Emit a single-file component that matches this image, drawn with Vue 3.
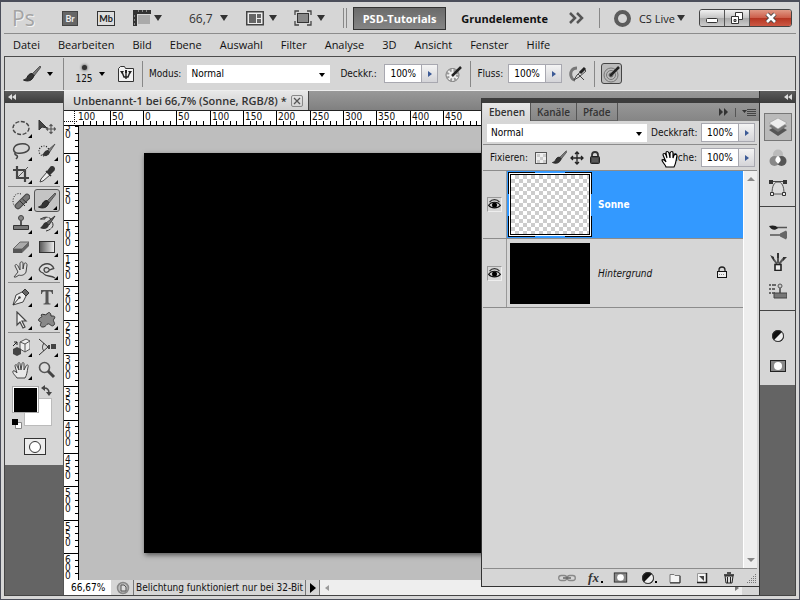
<script setup>
import { ref } from 'vue'

const menus = ['Datei', 'Bearbeiten', 'Bild', 'Ebene', 'Auswahl', 'Filter', 'Analyse', '3D', 'Ansicht', 'Fenster', 'Hilfe']

const brushShape = '<path d="M17 1l1 1-7 9-2-2z" fill="#777" stroke="#444" stroke-width=".8"/><path d="M9 8.500c-3 0-4 2-5 4-1 1.500-2 2-3.500 2.500 4 2 9 1 10.500-4.500z" fill="#333" stroke="#222"/>'

const icons = {
  ellipse: '<ellipse cx="9" cy="9" rx="8" ry="6.5" fill="none" stroke="#444" stroke-width="1.4" stroke-dasharray="4 1.6"/>',
  move: '<path d="M1 1v10l3-3 5 1z" fill="#444" stroke="#333"/><path d="M13 5.5v9M8.5 10h9M11.5 7L13 5.500l1.500 1.500M11.500 13l1.500 1.500 1.500-1.500M10 8.500L8.500 10l1.500 1.500M16 8.500l1.500 1.500-1.500 1.500" fill="none" stroke="#555" stroke-width="1.100"/>',
  lasso: '<path d="M4 11C0 9 1 3 8 2s10 2 9 5-7 5-12 4c-2-1-3 1-1 2s2 2 0 4" fill="none" stroke="#444" stroke-width="1.500"/>',
  quick: '<circle cx="6" cy="9" r="5" fill="none" stroke="#222" stroke-width="1.200" stroke-dasharray="1 1.500"/><path d="M17 2L9 9l2 2z" fill="#888" stroke="#555"/><path d="M10 8c-3 0-4 3-6 5 3 2 7 1 8-3z" fill="#333"/>',
  crop: '<path d="M5 1v12h12M1 5h12v12" fill="none" stroke="#444" stroke-width="2.200"/><path d="M5 13L16 2" stroke="#555"/>',
  pipette: '<path d="M9 7l3 3-7 6-3 1 1-3z" fill="#eee" stroke="#444"/><path d="M8 6l5 5M10 6l3-4c2-1 4 1 3 3l-4 4z" fill="#333" stroke="#333" stroke-width="1.500"/>',
  heal: '<path d="M9 2C4 0 1 5 1 9s2 6 5 7" fill="none" stroke="#222" stroke-dasharray="1 1.500"/><path d="M6 14L15 5" stroke="#444" stroke-width="6.500" stroke-linecap="round"/><path d="M6 14L15 5" stroke="#777" stroke-width="4.500" stroke-linecap="round"/><path d="M8 9l5 5M10.500 7l4.500 4" stroke="#333"/>',
  brush: brushShape,
  stamp: '<circle cx="9" cy="3" r="2.500" fill="#888" stroke="#444"/><path d="M8 5h2v5H8z" fill="#555"/><path d="M1.500 10.500h15v4h-15z" fill="#777" stroke="#333"/>',
  history: '<path d="M2 4h5V1M3 4c4-3 9-2 11 1M14 7c3 4-1 8-6 9" fill="none" stroke="#333" stroke-dasharray="7 1"/><path d="M17 1L8 8l3 2z" fill="#666" stroke="#333"/><path d="M8 7c-3 1-3 4-6 6 4 2 8 1 9-3z" fill="#333"/>',
  eraser: '<path d="M1 11l7-7h9l-7 7z" fill="#aaa" stroke="#666"/><path d="M1 11h9v4H1z" fill="#555"/><path d="M10 11l7-7v4l-7 7z" fill="#666"/>',
  gradient: '<rect x="1.500" y="3.500" width="15" height="11" fill="url(#ramp)" stroke="#333"/>',
  smudge: '<path d="M2 16l4-5-3-6c0-2 2-2 3 0l2 4V2c1-2 3-1 3 0v6l1-5c1-2 3-1 3 1l-1 7c-1 3-5 4-7 3l-3 2z" fill="#ddd" stroke="#444"/>',
  sponge: '<path d="M16 8c-1-4-5-6-9-5S0 8 2 10c1 2 3 1 4 3 2 3 7 1 11 4M6 9c0-3 4-3 5-1s-2 4-4 3zM11 9c2 0 3-2 5-1" fill="#ddd" stroke="#444" stroke-width="1.300"/>',
  pen: '<path d="M1 17l3-10 6-3 4 4-3 6z" fill="#eee" stroke="#444"/><path d="M10 4l3-3 4 4-3 3z" fill="#666" stroke="#333"/><path d="M1 17l6-7" stroke="#333"/><circle cx="7.500" cy="9.500" r="1.200" fill="#333"/>',
  type: '<path d="M3 2h12v4h-1c0-2-1-2.500-3.500-2.500V14c0 1.500 1 1.500 2 1.500v1h-7v-1c1 0 2 0 2-1.500V3.500C5 3.500 4 4 4 6H3z" fill="#555"/>',
  arrow: '<path d="M5 1v13l3-3 3 6 2-1-3-6h4z" fill="#eee" stroke="#444" stroke-width="1.200"/>',
  shape: '<path d="M3 4c2-2 4 1 6-1 2-3 4-1 4 2 3 0 5 0 3 3-2 2 2 4 0 6s-3 0-5-1-3 3-6 3-3-2-2-4-4-1-2-4 4-1 2-4z" fill="#888" stroke="#333"/>',
  cube: '<path d="M8 4l6-3 4 2v8l-5 3-5-3z" fill="#eee" stroke="#555"/><path d="M8 4l5 2 5-3M13 6v8" fill="none" stroke="#555"/><path d="M1 11l4-2 4 2v5l-4 2-4-2z" fill="#444"/><path d="M1 8l4-4M2 4h3v3" fill="none" stroke="#222"/>',
  camera: '<path d="M1 1l9 8-9 8M6 5c-2 3-2 6 0 8" fill="none" stroke="#333"/><path d="M10 7h2v4h-2zM13 6h5v5h-5z" fill="#444"/>',
  hand: '<path d="M5 17c-2-3-5-5-4-7 1-1 3 1 4 2L3 5c0-2 2-2 2 0l2 4-1-6c0-2 2-2 2 0l1 6 1-6c0-2 2-2 2 0v6l2-4c1-2 3-1 2 1-1 5-1 8-3 11z" fill="#e8e8e8" stroke="#444"/>',
  zoom: '<circle cx="6.500" cy="6.500" r="5" fill="#ddd" stroke="#555" stroke-width="1.600"/><path d="M10 10l6 6" stroke="#444" stroke-width="3"/>',
  layers: '<path d="M9 7l9 5-9 6-9-6z" fill="#555"/><path d="M9 3l9 5-9 6-9-6z" fill="#777"/><path d="M9 0l9 5-9 6-9-6z" fill="#eee" stroke="#999" stroke-width=".6"/>',
  channels: '<circle cx="9" cy="5.500" r="5" fill="#bbb"/><circle cx="5.500" cy="12" r="5" fill="#888"/><circle cx="12.500" cy="12" r="5" fill="#555"/><path d="M9 7c2 1 3 3 2.500 5L9 15l-2.500-3C6 10 7 8 9 7z" fill="#fff"/>',
  paths: '<path d="M3 15C3 7 5 3 9 3s6 4 6 12z" fill="#ddd" stroke="#555"/><path d="M2 2.500h14" stroke="#444"/><path d="M0 1h4v4H0zM14 1h4v4h-4z" fill="#333"/><path d="M1.500 13.500h3v3h-3zM13.500 13.500h3v3h-3z" fill="#eee" stroke="#333"/>',
  tools: '<path d="M6 4.500h12M1 12h11" stroke="#555" stroke-width="1.600"/><path d="M0 3c3-1 7-1 9 2-3 3-7 2-9-2z" fill="#222"/><path d="M11 10.500l6-3c2 2 2 6 0 9l-6-3z" fill="#666"/>',
  brushes: '<path d="M8 11L3 4M9 10V2M10 11l5-6" stroke="#555" stroke-width="2"/><path d="M1 2l4 2v4zM14 4h4l-4 4zM8 0h2v5H8z" fill="#333"/><rect x="6" y="11.500" width="6" height="6" fill="#eee" stroke="#222" stroke-width="1.600"/>',
  source: '<path d="M0 2h2M0 6h2M0 10h2M3 2h4M3 6h3M3 10h3" stroke="#444" stroke-width="1.500"/><circle cx="11" cy="3" r="2" fill="#ccc" stroke="#555"/><path d="M10 5h2v5h-2z" fill="#666"/><path d="M5 10h13v5H5z" fill="#777" stroke="#444"/>',
  adjust: '<circle cx="9" cy="9" r="6" fill="#111"/><path d="M13.200 4.800A6 6 0 0 1 4.800 13.200z" fill="#eee"/><circle cx="9" cy="9" r="5.500" fill="none" stroke="#333"/>',
  mask: '<rect x="1.500" y="3.500" width="15" height="11" fill="#888" stroke="#222"/><circle cx="9" cy="9" r="4" fill="#fff"/>',
  airbrush: '<circle cx="7.500" cy="10" r="6.500" fill="#eee" stroke="#777"/><circle cx="7.500" cy="10" r="5" fill="none" stroke="#999" stroke-width="3" stroke-dasharray="2 2"/><path d="M7 11L16 2" stroke="#222" stroke-width="2.500"/>',
  spray: '<path d="M8 3C3 3 1 7 2 11s3 4 4 4" fill="none" stroke="#777" stroke-width="3"/><path d="M5 15l3-5 7-6 2 2-7 6zM9 9l6 6" fill="#ddd" stroke="#444"/><path d="M11 8l5-5" stroke="#222" stroke-width="3"/>',
  target: '<circle cx="8" cy="10" r="7" fill="none" stroke="#777"/><circle cx="8" cy="10" r="4.500" fill="none" stroke="#777"/><circle cx="8" cy="10" r="2" fill="none" stroke="#666"/><path d="M7 11L16 2" stroke="#222" stroke-width="2.500"/>',
  brushFolder: '<path d="M1.500 3.500l2-2h4l1 2h8v13h-15z" fill="#f2f2f2" stroke="#333"/><path d="M9 14V7M5 7l2 5h4l2-5" fill="none" stroke="#222" stroke-width="1.400"/><path d="M3 6h4L5 9zM11 6h4l-2 3zM8 5h2v3H8z" fill="#222"/>',
  film: '<path d="M0 1h18v4H4v12H0z" fill="#333"/><path d="M5 2h1M9 2h1M13 2h1M1 7h1M1 11h1M1 15h1" stroke="#ddd"/><rect x="5" y="6" width="12" height="9" fill="#aaa"/>',
  arrange: '<rect x=".750" y="2.750" width="16.500" height="13" fill="#eee" stroke="#444" stroke-width="1.500"/><path d="M3 5h7v9H3zM11 5h4v4h-4zM11 10h4v4h-4z" fill="#666"/>',
  screen: '<path d="M1 6V2h4M13 2h4v4M17 12v4h-4M5 16H1v-4" fill="none" stroke="#444" stroke-width="1.300"/><rect x="3.500" y="4.500" width="11" height="9" fill="#888" stroke="#333"/>',
  checker: '<rect x="3.500" y="3.500" width="11" height="11" fill="#eee" stroke="#555"/><path d="M5 5h3v3H5zM11 5h3v3h-3zM8 8h3v3H8zM5 11h3v3H5zM11 11h3v3h-3z" fill="#ccc"/>',
  position: '<path d="M9 3v12M3 9h12M7 5l2-2 2 2M7 13l2 2 2-2M5 7L3 9l2 2M13 7l2 2-2 2" fill="none" stroke="#222" stroke-width="1.300"/>',
  lock: '<path d="M6 8V6c0-4 6-4 6 0v2" fill="none" stroke="#333" stroke-width="1.800"/><rect x="4.500" y="7.500" width="9" height="7" rx="1" fill="#444" stroke="#222"/><path d="M6 10h6M6 12h6" stroke="#888" stroke-width=".6"/>',
  lockOpen: '<path d="M6 8V6c0-4 6-4 6 0v2" fill="none" stroke="#222" stroke-width="1.300"/><rect x="4.500" y="7.500" width="9" height="6" fill="#eee" stroke="#111"/><path d="M6 10.500h6" stroke="#888" stroke-dasharray="1 1"/>',
  eye: '<path d="M2 10c3-5 11-5 14 0-3 4-11 4-14 0z" fill="#ccc" stroke="#111" stroke-width="1.400"/><circle cx="9" cy="9.500" r="3" fill="#000"/><path d="M3 6c3-4 9-4 12 0" fill="none" stroke="#333" stroke-width="1.500"/>',
  link: '<rect x=".7" y="6.500" width="8" height="5" rx="2.500" fill="none" stroke="#888" stroke-width="1.300"/><rect x="9.300" y="6.500" width="8" height="5" rx="2.500" fill="none" stroke="#888" stroke-width="1.300"/><path d="M5 9h8" stroke="#666" stroke-width="1.500"/>',
  folder: '<path d="M4 13.500v-8h4l1 1h5v7z" fill="#f4f4f4" stroke="#777"/><path d="M14 7v7H4" fill="none" stroke="#333"/>',
  page: '<path d="M4.500 4.500h9v9h-9z" fill="#f4f4f4" stroke="#999"/><path d="M13.500 4v9.500H4" fill="none" stroke="#222" stroke-width="1.500"/><path d="M6 7h5v5z" fill="#444"/>',
  trash: '<path d="M5 7h8l-1 7H6z" fill="#ddd" stroke="#222"/><path d="M4 6h10M7 4h4" stroke="#222" stroke-width="1.400"/><path d="M7.500 8v6M10.500 8v6" stroke="#222"/>'
}

const toolGroups = [
  [['ellipse', 1], ['move', 0], ['lasso', 1], ['quick', 1], ['crop', 1], ['pipette', 1]],
  [['heal', 1], ['brush', 1], ['stamp', 1], ['history', 1], ['eraser', 1], ['gradient', 1], ['smudge', 1], ['sponge', 1]],
  [['pen', 1], ['type', 1], ['arrow', 1], ['shape', 1]],
  [['cube', 1], ['camera', 1], ['hand', 1], ['zoom', 0]]
]
const activeTool = ref('brush')

const dockGroups = [['layers', 'channels', 'paths'], ['tools', 'brushes', 'source'], ['adjust', 'mask']]
const activeDock = ref('layers')

// At 66.7% zoom fifty document pixels cover a third of a hundred screen pixels.
const STEP = 100 / 3
function majors(origin, from, to) {
  const out = []
  for (let i = from; i <= to; i++) out.push({ pos: Math.round(origin + i * STEP), label: String(Math.abs(i * 50)) })
  return out
}
function minors(origin, from, to) {
  const out = []
  for (let i = from * 5; i <= to * 5; i++) out.push(Math.round(origin + (i * STEP) / 5))
  return out
}
const hMajor = majors(66, -2, 9)
const hMinor = minors(66, -2, 18)
const vMajor = majors(28, -1, 12)
const vMinor = minors(28, -1, 13)

const opacity = ref('100%')
const flow = ref('100%')
const layerOpacity = ref('100%')
const layerFill = ref('100%')
const layers = [
  { name: 'Sonne', kind: 'clear' },
  { name: 'Hintergrund', kind: 'black' }
]
const selectedLayer = ref('Sonne')
</script>

<template>
  <div class="window">
    <svg class="defs" aria-hidden="true">
      <defs>
        <linearGradient id="ramp"><stop offset="0" stop-color="#555" /><stop offset="1" stop-color="#f2f2f2" /></linearGradient>
      </defs>
    </svg>

    <header class="titlebar">
      <span class="ps">Ps</span>
      <button class="chip br" aria-label="Bridge">Br</button>
      <button class="chip mb" aria-label="Mini Bridge">Mb</button>
      <button class="drop extras" aria-label="Extras"><svg class="ico" viewBox="0 0 18 18" v-html="icons.film" /><i class="tri" /></button>
      <button class="drop zoomlevel">66,7<i class="tri" /></button>
      <button class="drop arrange" aria-label="Dokumente anordnen"><svg class="ico" viewBox="0 0 18 18" v-html="icons.arrange" /><i class="tri" /></button>
      <button class="drop" aria-label="Bildschirmmodus"><svg class="ico" viewBox="0 0 18 18" v-html="icons.screen" /><i class="tri" /></button>
      <i class="double" />
      <button class="workspace on">PSD-Tutorials</button>
      <button class="workspace">Grundelemente</button>
      <button class="chevrons" aria-label="Mehr">
        <svg width="16" height="12" viewBox="0 0 16 12"><path d="M1 1l5 5-5 5M8 1l5 5-5 5" fill="none" stroke="#555" stroke-width="2.500" /></svg>
      </button>
      <i class="rule" />
      <button class="live"><i class="ring" />CS Live<i class="tri" /></button>
      <div class="winbtns">
        <button aria-label="Minimieren"><svg width="14" height="14" viewBox="0 0 14 14"><rect x="1.500" y="7.500" width="11" height="4" rx="1" fill="#fff" stroke="#333" /></svg></button>
        <button aria-label="Wiederherstellen"><svg width="14" height="14" viewBox="0 0 14 14"><path d="M5.500 1.500h7v7h-7z" fill="#fff" stroke="#333" /><path d="M1.500 5.500h7v7h-7z" fill="#fff" stroke="#333" /><path d="M4 8.500h2v2H4z" fill="#ccc" stroke="#333" /></svg></button>
        <button class="close" aria-label="Schließen"><svg width="14" height="14" viewBox="0 0 14 14"><path d="M3 3l8 8M11 3l-8 8" stroke="#444" stroke-width="4.500" /><path d="M3 3l8 8M11 3l-8 8" stroke="#fff" stroke-width="2.600" /></svg></button>
      </div>
    </header>

    <nav class="menubar">
      <a v-for="m in menus" :key="m" href="#">{{ m }}</a>
    </nav>

    <section class="options">
      <i class="vgrip" />
      <button class="drop tool" aria-label="Pinsel"><svg class="ico" viewBox="0 0 18 18" v-html="icons.brush" /><i class="tri small" /></button>
      <i class="sep tall" />
      <button class="drop tip"><span class="tipbox"><i class="dot" />125</span><i class="tri small" /></button>
      <button class="plain" aria-label="Pinselbedienfeld"><svg class="ico" viewBox="0 0 18 18" v-html="icons.brushFolder" /></button>
      <i class="sep" />
      <label for="mode">Modus:</label>
      <span class="selectbox mode"><select id="mode"><option>Normal</option></select><i class="tri small" /></span>
      <label for="opac" class="lopac">Deckkr.:</label>
      <span class="num"><input id="opac" v-model="opacity"><button aria-label="Deckkraft einstellen"><i class="right" /></button></span>
      <button class="plain a" aria-label="Druck für Deckkraft"><svg class="ico" viewBox="0 0 18 18" v-html="icons.airbrush" /></button>
      <i class="sep" />
      <label for="flow">Fluss:</label>
      <span class="num"><input id="flow" v-model="flow"><button aria-label="Fluss einstellen"><i class="right" /></button></span>
      <button class="plain a" aria-label="Airbrush"><svg class="ico" viewBox="0 0 18 18" v-html="icons.spray" /></button>
      <i class="sep" />
      <button class="plain boxed" aria-label="Druck für Größe"><svg class="ico" viewBox="0 0 18 18" v-html="icons.target" /></button>
    </section>

    <main class="work">
      <aside class="toolbox">
        <button class="collapse" aria-label="Werkzeuge einklappen"><svg width="8" height="6" viewBox="0 0 8 6"><path d="M4 0v6L0 3zM8 0v6L4 3z" fill="#ddd" /></svg></button>
        <div class="toolbody">
          <i class="hgrip" />
          <div v-for="(group, g) in toolGroups" :key="g" class="group">
            <button v-for="[name, more] in group" :key="name" class="tool-btn" :class="{ on: name === activeTool, more }" :aria-label="name" @click="activeTool = name">
              <svg class="ico" viewBox="0 0 18 18" v-html="icons[name]" />
            </button>
          </div>
          <div class="colors">
            <svg width="42" height="44" viewBox="0 0 42 44">
              <rect x="13.500" y="13.500" width="27" height="27" fill="#fff" stroke="#bbb" />
              <rect x="1.500" y="1.500" width="26" height="26" fill="#fff" stroke="#aaa" />
              <rect x="3" y="3" width="23" height="24" fill="#000" />
              <path d="M33 3c4 0 5 2 5 5" fill="none" stroke="#444" stroke-width="1.500" />
              <path d="M34 0v6l-4-3zM35 7h6l-3 4z" fill="#444" />
              <path d="M4.500 37.500h6v6h-6z" fill="#fff" stroke="#888" /><path d="M1 34h6v6H1z" fill="#000" />
            </svg>
          </div>
          <button class="quickmask" aria-label="Maskierungsmodus"><i /></button>
        </div>
      </aside>

      <section class="document">
        <div class="tabs">
          <div class="tab"><span>Unbenannt-1 bei 66,7% (Sonne, RGB/8) *</span>
            <button class="x" aria-label="Dokument schließen"><svg width="8" height="8" viewBox="0 0 8 8"><path d="M1 1l6 6M7 1L1 7" stroke="#555" stroke-width="1.300" /></svg></button>
          </div>
        </div>
        <div class="hruler">
          <svg class="corner" viewBox="0 0 14 14"><path d="M10.500 0v14M0 10.500h14" stroke="#111" stroke-dasharray="1 1" /></svg>
          <svg class="scale">
            <path v-for="m in hMinor" :key="'a' + m" :d="`M${m - 0.5} 10v4`" stroke="#000" />
            <g v-for="m in hMajor" :key="m.pos"><path :d="`M${m.pos - 0.5} 0v14`" stroke="#000" /><text :x="m.pos + 1" y="9">{{ m.label }}</text></g>
          </svg>
        </div>
        <div class="stage">
          <svg class="vruler">
            <path v-for="m in vMinor" :key="'a' + m" :d="`M11 ${m - 0.5}h3`" stroke="#000" />
            <g v-for="m in vMajor" :key="m.pos">
              <path :d="`M0 ${m.pos - 0.5}h14`" stroke="#000" />
              <text v-for="(d, i) in m.label" :key="i" x="1" :y="m.pos + 9 + i * 8">{{ d }}</text>
            </g>
          </svg>
          <div class="canvas"><div class="paper" /></div>
        </div>
        <footer class="status">
          <input class="pct" aria-label="Zoom" value="66,67%">
          <span class="state"><svg width="14" height="14" viewBox="0 0 14 14"><circle cx="7" cy="7" r="5.500" fill="#bbb" stroke="#888" stroke-width="1.500" /><path d="M5 4h3l2 2v4H5z" fill="#ddd" stroke="#555" /></svg></span>
          <span class="msg">Belichtung funktioniert nur bei 32-Bit</span>
          <button class="play" aria-label="Statusanzeige"><i class="right big" /></button>
          <div class="hscroll"><i class="left" /><i class="right grey" /></div>
          <i class="nook" />
        </footer>

        <section class="panel">
          <div class="ptabs">
            <button class="on">Ebenen</button><button>Kanäle</button><button>Pfade</button>
            <span class="pmenu">
              <svg width="10" height="8" viewBox="0 0 10 8"><path d="M0 0v8l4-4zM5 0v8l4-4z" fill="#333" /></svg>
              <i />
              <svg width="14" height="9" viewBox="0 0 14 9"><path d="M0 2h5L2.500 5z" fill="#333" /><path d="M5 1.500h9M5 3.500h9M5 5.500h9M5 7.500h9" stroke="#444" /></svg>
            </span>
          </div>
          <div class="prow">
            <span class="selectbox blend"><select aria-label="Füllmethode"><option>Normal</option></select><i class="tri small" /></span>
            <label for="lop">Deckkraft:</label>
            <span class="num"><input id="lop" v-model="layerOpacity"><button aria-label="Deckkraft"><i class="right" /></button></span>
          </div>
          <div class="prow locks">
            <span class="fix">Fixieren:</span>
            <button v-for="n in ['checker', 'brush', 'position', 'lock']" :key="n" class="plain lockbtn" :aria-label="n"><svg class="ico" :class="{ sm: n === 'brush' }" viewBox="0 0 18 18" v-html="icons[n]" /></button>
            <label for="lfill" class="fill">Fläche:
              <svg class="cursor" width="17" height="18" viewBox="0 0 17 18"><path d="M5 17c-1-3-4-5-4-7 1-1 3 0 4 2L2 5c0-2 2-2 3 0l1 3-1-5c0-2 2-2 3 0l1 5V3c1-2 3-2 3 0v5l1-3c1-1 3-1 3 1-1 4-1 8-3 11z" fill="#fff" stroke="#000" stroke-width="1.200" /></svg>
            </label>
            <span class="num"><input id="lfill" v-model="layerFill"><button aria-label="Fläche"><i class="right" /></button></span>
          </div>
          <div class="list">
            <div class="rows">
              <div v-for="l in layers" :key="l.name" class="layer" :class="{ sel: l.name === selectedLayer }" @click="selectedLayer = l.name">
                <div class="eyecol"><button aria-label="Sichtbarkeit"><svg class="ico sm" viewBox="0 0 18 18" v-html="icons.eye" /></button></div>
                <div class="lbody">
                  <span class="frame"><span class="thumb" :class="l.kind" /></span>
                  <span class="lname">{{ l.name }}</span>
                  <svg v-if="l.kind === 'black'" class="ico" viewBox="0 0 18 18" v-html="icons.lockOpen" />
                </div>
              </div>
            </div>
            <div class="vscroll"><i class="up" /><i class="down" /></div>
          </div>
          <div class="pfoot">
            <button aria-label="Verknüpfen"><svg class="ico" viewBox="0 0 18 18" v-html="icons.link" /></button>
            <button class="fx more">fx</button>
            <button v-for="n in ['mask', 'adjust', 'folder', 'page', 'trash']" :key="n" :class="{ more: n === 'adjust' }" :aria-label="n"><svg class="ico" :class="{ sm: n === 'mask' }" viewBox="0 0 18 18" v-html="icons[n]" /></button>
            <svg class="sizer" width="12" height="12" viewBox="0 0 12 12"><path d="M10.500 1v10M8.500 3v8M6.500 5v6M4.500 7v4M2.500 9v2" stroke="#777" stroke-dasharray="1 1" /></svg>
          </div>
        </section>
      </section>

      <aside class="dock">
        <button class="collapse" aria-label="Bedienfelder ausklappen"><svg width="8" height="6" viewBox="0 0 8 6"><path d="M4 0v6L0 3zM8 0v6L4 3z" fill="#ddd" /></svg></button>
        <div v-for="(group, g) in dockGroups" :key="g" class="dgroup">
          <i class="hgrip" />
          <button v-for="n in group" :key="n" :class="{ on: n === activeDock }" :aria-label="n" @click="activeDock = n"><svg class="ico" viewBox="0 0 18 18" v-html="icons[n]" /></button>
        </div>
      </aside>
    </main>
  </div>
</template>

<style>
body { margin: 0; }
</style>

<style scoped>
* { box-sizing: border-box; }
.window { min-height: 100vh; display: flex; flex-direction: column; padding: 1px 3px 3px; background: #d6d6d6; border: 1px solid #4b4e5a; border-top-width: 2px; font-family: "DejaVu Sans Condensed", "DejaVu Sans", sans-serif; font-size: 10px; color: #111; overflow: hidden; }
.defs { position: absolute; width: 0; height: 0; }
button { margin: 0; padding: 0; border: 0; background: none; font: inherit; color: inherit; display: flex; align-items: center; justify-content: center; flex: none; }
i { display: block; flex: none; }
.ico { width: 18px; height: 18px; flex: none; display: block; }
.ico.sm { width: 15px; height: 15px; }
.tri { border: 4px solid transparent; border-top: 6px solid #333; border-bottom: 0; }
.tri.small { border-width: 3px; border-top-width: 4px; border-bottom: 0; border-top-color: #000; }
.right { border: 3px solid transparent; border-left: 4px solid #3c5a96; border-right: 0; }
.right.big { border-width: 5px; border-left: 6px solid #000; border-right: 0; }
.right.grey { border-left-color: #777; }
.left { border: 3px solid transparent; border-right: 4px solid #999; border-left: 0; }

.titlebar { height: 31px; display: flex; align-items: center; padding: 0 4px 0 8px; border-bottom: 1px solid #8c8c8c; font-family: "Open Sans", sans-serif; }
.ps { width: 50px; font: 21px "Open Sans", sans-serif; color: #a4a4a4; text-shadow: 1px 1px #f4f4f4; }
.chip { font: bold 9px Lato, sans-serif; height: 15px; }
.br { width: 16px; background: #666; border: 1px solid #444; color: #eee; }
.mb { width: 18px; margin-left: 19px; background: #ddd; border: 1px solid #333; color: #222; }
.drop { gap: 5px; }
.extras { margin-left: 18px; gap: 3px; }
.zoomlevel { margin-left: 27px; gap: 7px; font-size: 12px; color: #333; }
.arrange { margin-left: 18px; margin-right: 17px; }
.double { width: 4px; height: 20px; margin: 0 6px 0 18px; border: solid #888; border-width: 0 1px; }
.workspace { height: 23px; padding: 0 8px; font-weight: 700; font-size: 11px; }
.workspace.on { padding: 0 9px; margin-right: 7px; color: #fff; background: linear-gradient(#6b6b6b, #858585); border: 1px solid #333; }
.chevrons { margin: 0 14px 0 13px; }
.rule { width: 1px; height: 20px; background: #888; margin: 0 14px 0 0; }
.live { gap: 2px; font-size: 11px; margin: 0 12px 0 0; color: #222; }
.ring { width: 17px; height: 17px; border: 4px solid #5c5c5c; border-radius: 50%; margin-right: 6px; }
.winbtns { display: flex; margin-left: auto; border: 1px solid #444; border-radius: 3px; overflow: hidden; }
.winbtns button { width: 25px; height: 16px; background: linear-gradient(#f0f0f0, #c4c4c4 50%, #a8a8a8 50%, #ccc); border-right: 1px solid #555; }
.winbtns .close { width: 41px; border: 0; background: linear-gradient(#e09884, #cc5c48 50%, #b43420 50%, #cc5844); }

.menubar { height: 22px; display: flex; align-items: center; gap: 18px; padding: 0 0 2px 9px; font: 11px "Open Sans", sans-serif; }
.menubar a { color: #111; text-decoration: none; }

.options { height: 35px; display: flex; align-items: center; border: 1px solid #4c4c4c; border-bottom: 1px solid #eee; padding-left: 4px; }
.vgrip { width: 4px; height: 22px; background: radial-gradient(#888 40%, transparent 50%) 0 0 / 2px 2px; margin-right: 10px; }
.tool { gap: 6px; margin-right: 10px; }
.sep { width: 1px; height: 26px; background: #888; margin: 0 6px 0 7px; }
.sep.tall { height: 32px; margin: 0 11px 0 0; }
.tip { gap: 6px; margin-right: 12px; }
.tipbox { display: flex; flex-direction: column; align-items: center; gap: 3px; width: 18px; }
.dot { width: 5px; height: 5px; border-radius: 50%; background: #333; box-shadow: 0 0 3px #222; margin-top: 1px; }
.selectbox { position: relative; display: flex; align-items: center; }
.selectbox select { appearance: none; width: 100%; height: 18px; border: 0; background: #fff; padding: 0 4px; font: inherit; color: #000; border-radius: 0; }
.selectbox .tri { position: absolute; right: 5px; top: 8px; pointer-events: none; }
.mode { width: 143px; margin-left: 6px; }
.lopac { margin-left: 10px; width: 39px; }
.num { display: flex; width: 54px; height: 19px; border: 1px solid #a8a8b0; margin-left: 5px; flex: none; }
.num input { width: 0; flex: 1; min-width: 0; padding: 0 0 0 5px; border: 0; background: #fff; font: inherit; color: #000; }
.num button { width: 16px; background: linear-gradient(#f4f4f4, #d4d4d8); border-left: 1px solid #a8a8b0; }
.a { margin-left: 7px; }
.boxed { width: 21px; height: 21px; background: #bbb; border: 1px solid #444; border-radius: 3px; }

.work { flex: 1; display: flex; min-height: 0; border: solid #444; border-width: 0 1px 1px; }
.collapse { width: 100%; height: 12px; background: linear-gradient(#5c5c5c, #3c3c3c); justify-content: flex-start; padding-left: 3px; }
.toolbox { width: 58px; background: #646464; flex: none; }
.toolbody { background: #d6d6d6; padding: 4px 3px 10px; }
.hgrip { height: 4px; margin: 0 3px 5px; background: radial-gradient(#888 40%, transparent 50%) 0 0 / 2px 2px; }
.group { display: grid; grid-template-columns: 26px 26px; grid-auto-rows: 23px; padding-bottom: 1px; border-bottom: 1px solid #8c8c8c; margin-bottom: 2px; }
.group:nth-of-type(4) { border: 0; }
.tool-btn { position: relative; width: 26px; height: 23px; }
.tool-btn.on { background: #c4c4c4; border: 1px solid #555; border-radius: 3px; }
.more { position: relative; }
.tool-btn.more::after { content: ""; position: absolute; right: 2px; bottom: 1px; border: 2px solid; border-color: transparent #000 #000 transparent; }
.colors { display: flex; padding-left: 3px; margin-top: 3px; }
.quickmask { width: 22px; height: 17px; margin: 9px 0 0 16px; background: #eee; border: 1px solid #333; }
.quickmask i { width: 12px; height: 12px; border: 1px solid #333; border-radius: 50%; background: #fff; }

.document { position: relative; flex: 1; min-width: 0; display: flex; flex-direction: column; border-left: 1px solid #555; border-right: 1px solid #333; }
.tabs { height: 20px; background: linear-gradient(#999, #808080); border-bottom: 1px solid #222; display: flex; }
.tab { display: flex; align-items: center; gap: 4px; padding: 0 5px 0 9px; background: linear-gradient(#e8e8e8, #d0d0d0); border-right: 1px solid #444; font: 600 11px "Open Sans", sans-serif; color: #333; white-space: nowrap; }
.x { width: 12px; height: 12px; border: 1px solid #888; border-radius: 2px; }
.hruler { display: flex; height: 15px; background: #fff; border-bottom: 1px solid #000; overflow: hidden; }
.corner { width: 14px; height: 14px; flex: none; }
.scale { flex: 1; height: 14px; min-width: 0; }
.stage { flex: 1; min-height: 0; display: flex; }
.vruler { width: 15px; flex: none; height: auto; background: #fff; border-right: 1px solid #000; }
.scale text, .vruler text { font: 10px "DejaVu Sans Condensed", "DejaVu Sans", sans-serif; fill: #111; }
.canvas { flex: 1; display: flex; background: #bebebe; padding: 27px 0 27px 65px; overflow: hidden; }
.paper { flex: 1; background: #000; box-shadow: 1px 2px 5px #555; }
.status { height: 15px; display: flex; align-items: stretch; background: #d6d6d6; }
.pct { width: 47px; border: 0; padding: 0 0 0 7px; font: inherit; background: #fff; }
.state { width: 22px; display: flex; align-items: center; justify-content: center; padding-left: 2px; }
.msg { border-left: 1px solid #777; padding: 0 2px; line-height: 15px; white-space: nowrap; }
.play { width: 15px; border: solid #777; border-width: 0 1px; }
.hscroll { flex: 1; display: flex; align-items: center; justify-content: space-between; padding: 0 3px 0 5px; background: #eee; }
.nook { width: 17px; }

.panel { position: absolute; right: -1px; top: 7px; bottom: 8px; width: 279px; display: flex; flex-direction: column; background: #d6d6d6; border: 1px solid #333; border-top: 5px solid #3c3c3c; padding: 0 2px 0 1px; }
.ptabs { display: flex; height: 18px; margin-right: -2px; background: linear-gradient(#979797, #858585); font: 600 10px "Open Sans", sans-serif; color: #333; }
.ptabs button { padding: 0 6px; border-right: 1px solid #555; border-bottom: 1px solid #666; }
.ptabs .on { padding: 0 5px 0 6px; background: linear-gradient(#e8e8e8, #d6d6d6); border-bottom: 0; }
.pmenu { margin-left: auto; display: flex; align-items: center; gap: 6px; padding-right: 3px; }
.pmenu i { width: 1px; height: 9px; background: #555; }
.prow { display: flex; align-items: center; height: 24px; border-bottom: 1px solid #8c8c8c; padding: 0 2px 0 4px; }
.prow .num { margin-left: auto; }
.blend { width: 160px; margin-right: 4px; }
.locks { height: 26px; }
.fix { margin: 0 2px 0 3px; width: 40px; }
.lockbtn { width: 18px; }
.fill { position: relative; margin-left: auto; }
.prow.locks .num { margin-left: 4px; }
.cursor { position: absolute; left: -4px; top: -2px; }
.list { flex: 1; display: flex; min-height: 0; border-bottom: 1px solid #8c8c8c; }
.rows { flex: 1; min-width: 0; }
.layer { display: flex; height: 68px; border-bottom: 1px solid #8c8c8c; }
.layer + .layer { height: 69px; }
.eyecol { width: 24px; border-right: 1px solid #999; display: flex; align-items: center; justify-content: center; }
.eyecol button { width: 15px; height: 15px; border: 1px solid; border-color: #999 #eee #eee #999; }
.lbody { flex: 1; display: flex; align-items: center; padding: 0 12px 0 1px; }
.sel .lbody { background: #3399ff; color: #fff; font-weight: 700; }
.lname { flex: 1; padding-left: 6px; font-style: italic; }
.sel .lname { font-style: normal; }
.frame { padding: 2px; }
.sel .frame { background: linear-gradient(#39f, #39f) 50% 0 / 30px 100% no-repeat, linear-gradient(#39f, #39f) 0 50% / 100% 22px no-repeat, #000; }
.thumb { display: block; width: 80px; height: 61px; background: #000; }
.thumb.clear { border: 1px solid #000; background: conic-gradient(#ccc 25%, #fff 0 50%, #ccc 0 75%, #fff 0) 0 0 / 8px 8px; }
.sel .thumb { box-shadow: 0 0 0 1px #fff; }
.vscroll { width: 14px; background: #eee; border-left: 1px solid #fff; display: flex; flex-direction: column; align-items: center; justify-content: space-between; padding: 6px 0; }
.up { border: 4px solid transparent; border-bottom: 4px solid #888; border-top: 0; }
.down { border: 4px solid transparent; border-top: 4px solid #888; border-bottom: 0; }
.pfoot { height: 17px; display: flex; align-items: center; justify-content: flex-end; }
.pfoot button { width: 27px; height: 15px; position: relative; }
.pfoot .more::after { content: ""; position: absolute; right: 4px; bottom: 2px; width: 2px; height: 2px; background: #000; }
.fx { font: italic bold 13px "Liberation Serif", serif; color: #333; }
.sizer { margin: 3px 0 0 3px; }

.dock { width: 35px; flex: none; background: #646464; }
.dock .collapse { justify-content: flex-end; padding-right: 3px; }
.dgroup { background: #d6d6d6; padding: 4px 3px 0; border-bottom: 1px solid #444; height: 104px; display: flex; flex-direction: column; align-items: center; }
.dgroup .hgrip { align-self: stretch; margin: 0 1px 2px; }
.dgroup:last-child { height: 74px; border: 0; }
.dgroup button { width: 28px; height: 30px; }
.dgroup .on { height: 28px; margin-bottom: 2px; background: #bababa; border: 1px solid #777; }
</style>
